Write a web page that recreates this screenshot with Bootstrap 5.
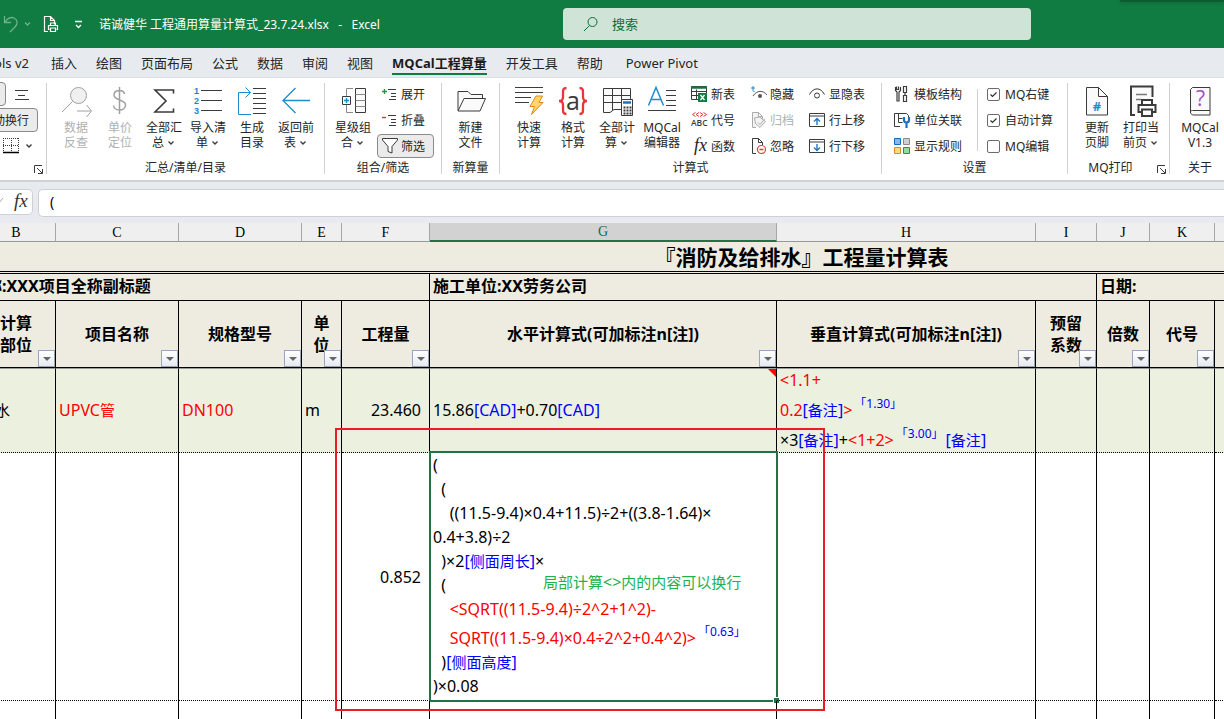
<!DOCTYPE html>
<html lang="zh-CN">
<head>
<meta charset="utf-8">
<meta name="viewport" content="width=device-width, initial-scale=1">
<title>诺诚健华 工程通用算量计算式_23.7.24.xlsx - Excel</title>
<link href="https://cdn.jsdelivr.net/npm/bootstrap@5.3.0/dist/css/bootstrap.min.css" rel="stylesheet">
<style>
  body { font-family: "Noto Sans", "Noto Sans CJK SC", sans-serif; font-size: 12px; line-height: 15px; color: #262626; background: #e7ebef; }
  svg { display: block; flex: none; fill: none; stroke: #3b3b3b; }
  svg text { stroke: none; font-family: "Open Sans", sans-serif; }

  /* title bar */
  .titlebar { height: 48px; background: #107c41; color: #fff; }
  .titlebar svg { stroke: #fff; }
  .qat { width: 99px; }
  .searchbox { left: 46%; width: 468px; height: 32px; background: #cfe3d7; border-radius: 4px; color: #0f6b38; padding: 0 20px; gap: 14px; }
  .searchbox svg { stroke: #0f6b38; }
  .searchbox input { border: 0; background: none; outline: 0; font-size: 13px; color: #0f6b38; padding: 0; }
  .searchbox input::placeholder { color: #0f6b38; opacity: 1; }
  .topshade { top: 0; right: 0; width: 104px; height: 2px; background: #0c5c31; box-shadow: 0 0 4px #0c5c31; }

  /* tabs */
  .tabs { height: 30px; font-size: 13px; line-height: 20px; padding-top: 5px; border-bottom: 1px solid #dde1e5; white-space: nowrap; }
  .tabs .nav-link { padding: 0; margin-right: 19px; color: #262626; line-height: 20px; }
  .tabs .nav-link.active { font-weight: 700; border-bottom: 2px solid #107c41; color: #1b1b1b; height: 22px; }
  .tabs .first-tab { width: 51px; }
  .tabs .first-tab .nav-link { margin-right: 22px; }

  /* ribbon */
  .ribbon { height: 102px; background: #fff; }
  .rgroup { flex: none; padding-top: 3px; }
  .rbody { height: 78px; }
  .rlabel { line-height: 18px; text-align: center; position: relative; }
  .launcher { right: 3px; bottom: 3px; padding: 0; border: 0; background: none; }
  .sep { width: 1px; flex: none; background: #d1d1d1; margin: 5px 0 6px; }
  .sep-inner { width: 1px; flex: none; background: #d1d1d1; margin: 8px 9px 8px 15px; }
  .big, .small-cmd { border: 0; background: none; color: inherit; font-size: 12px; line-height: 15px; padding: 0; border-radius: 4px; white-space: nowrap; }
  .big { width: 44px; padding-top: 3px; display: flex; flex-direction: column; align-items: center; gap: 2px; }
  .big.wide { width: 46px; }
  .small-cmd { height: 26px; display: flex; align-items: center; gap: 2px; }
  .big:disabled, .small-cmd:disabled { color: #b1b1b1; }
  .chev { display: inline-block; margin-left: 3px; vertical-align: 1px; }
  .outline-cmd { border: 1px solid #8a8a8a; background: #ebebeb; height: 24px; margin: 1px 0; }
  .in4 .small-cmd { padding-left: 4px; }
  .in4 .outline-cmd { padding-left: 3px; padding-right: 8px; }
  .tick { gap: 5px; height: 26px; }
  .tick input { appearance: none; width: 13px; height: 13px; margin: 0; border: 1px solid #6b6b6b; border-radius: 2px; background: #fff; }
  .tick input:checked { background: #fff url("data:image/svg+xml,%3Csvg xmlns='http://www.w3.org/2000/svg' viewBox='0 0 11 11'%3E%3Cpath d='M2.5 5.5l2 2 4-4' fill='none' stroke='%23333' stroke-width='1.2'/%3E%3C/svg%3E"); }

  /* formula bar */
  .fbar { height: 43px; padding: 7px 0 8px; border-top: 2px solid #cfd3d7; gap: 5px; }
  .fxbox { width: 33px; border: 1px solid #cdd1d5; border-left: 0; border-radius: 0 5px 5px 0; background: #fff; padding-right: 3px; }
  .fbar input { border: 1px solid #cdd1d5; border-right: 0; border-radius: 5px 0 0 5px; font-size: 14px; line-height: 20px; padding: 0 11px 3px; color: #000; min-height: 0; height: 28px; }

  /* sheet */
  .grid-view { background: #fff; min-height: 0; }
  .sheet { table-layout: fixed; width: 1650px; margin-left: -23px; border-collapse: separate; border-spacing: 0; color: #000; font-size: 16px; line-height: 24px; }
  .sheet td, .sheet th { border-right: 1px solid #000; padding: 0 3px; vertical-align: middle; position: relative; }
  .sheet .letters th { height: 19px; background: #efefef; border-right-color: #a6a6a6; border-bottom: 1px solid #999; font: 14px/17px "Liberation Serif", serif; text-align: center; padding-top: 1px; }
  .sheet .letters .picked { background: #d2d2d2; color: #1d6b41; border-bottom: 2px solid #217346; padding-top: 0; }
  .tan th { background: #eeece1; border-bottom: 1px solid #000; font-size: 16px; line-height: 22px; font-weight: 700; }
  .sheet .tan .sheet-title { height: 32px; font-size: 21px; line-height: 28px; text-align: center; border-bottom: 3px double #000; }
  .sheet .tan .info { height: 27px; text-align: left; padding-bottom: 2px; }
  .sheet .tan .clip-start { padding-left: 9px; }
  .heads th { height: 67px; text-align: center; }
  .filter { right: 0; bottom: 0; width: 17px; height: 17px; border: 1px solid #9aa5b8; background: linear-gradient(#fff, #e6eaf1); padding: 0; display: flex; align-items: center; justify-content: center; }
  .filter::before { content: ""; border: 4px solid transparent; border-top: 4px solid #666; border-bottom: 0; }
  .rowline td { border-bottom: 1px dotted #000; }
  .sheet .green td { height: 85px; background: #ebf1de; border-top: 1px solid #999; padding-bottom: 2px; }
  .row5 td { height: 248px; }
  .row6 td { height: 40px; }
  .tall3 { line-height: 30px; margin: -5px 0; }
  .formula { white-space: pre; }
  .raised { padding-top: 5px; }
  .cj { font-size: 15px; line-height: 0; }
  .up { font-size: 12px; line-height: 0; vertical-align: 8px; color: #00f; margin: 0 2px; }
  .r { color: #f00; }
  .b { color: #00f; }
  .note-flag { right: 0; top: 0; border: 4px solid transparent; border-top-color: #f00; border-right-color: #f00; }
  .selection { left: -1px; top: -2px; right: -2px; bottom: -2px; border: 2px solid #217346; pointer-events: none; }
  .selection::after { content: ""; position: absolute; right: -3px; bottom: -3px; width: 6px; height: 6px; background: #217346; border: 1px solid #fff; border-width: 1px 0 0 1px; }
  .callout-box { left: -95px; top: -25px; right: -49px; bottom: -11px; border: 2px solid #ed1c24; z-index: 3; pointer-events: none; }
  .callout-text { left: 113px; top: 117px; color: #22b14c; white-space: nowrap; z-index: 3; }
</style>
</head>
<body class="vh-100 overflow-hidden d-flex flex-column">

<header class="titlebar d-flex align-items-center position-relative flex-shrink-0">
  <div class="qat flex-shrink-0">
    <svg width="90" height="20" viewBox="0 0 90 20"><g opacity=".4"><path d="M4.500 2v6.500h6.500M5 8.500c2-4 6-6 9-4.500 4 2 4 6 1 9l-5 5" stroke-width="1.300"/><path d="M25 8.500l2.500 2.500 2.500-2.500" stroke-width="1.300"/></g><path d="M48 17.500h-3.500v-15h6l4 4v4M50.500 2.500v4h4M49.500 15.500h-1v-4h9v4h-1M50.500 11.500V9h5v2.500M50.500 14h5v3.500h-5z" stroke-width="1.200"/><path d="M75 7.500h7M76 11l2.500 2.500 2.500-2.500" stroke-width="1.300"/></svg>
  </div>
  <span class="text-nowrap">诺诚健华 工程通用算量计算式_23.7.24.xlsx&nbsp;&nbsp; -&nbsp;&nbsp; Excel</span>
  <label class="searchbox position-absolute d-flex align-items-center">
    <svg width="15" height="16" viewBox="0 0 15 16"><circle cx="9.500" cy="6" r="4.500"/><path d="M6.500 9.500L1 15"/></svg>
    <input type="search" class="flex-fill" placeholder="搜索" aria-label="搜索">
  </label>
  <div class="topshade position-absolute"></div>
</header>

<nav class="tabs flex-shrink-0 overflow-hidden">
  <ul class="nav flex-nowrap">
    <li class="first-tab d-flex justify-content-end flex-shrink-0"><a class="nav-link" href="#">Tools v2</a></li>
    <li><a class="nav-link" href="#">插入</a></li>
    <li><a class="nav-link" href="#">绘图</a></li>
    <li><a class="nav-link" href="#">页面布局</a></li>
    <li><a class="nav-link" href="#">公式</a></li>
    <li><a class="nav-link" href="#">数据</a></li>
    <li><a class="nav-link" href="#">审阅</a></li>
    <li><a class="nav-link" href="#">视图</a></li>
    <li><a class="nav-link active" href="#">MQCal工程算量</a></li>
    <li><a class="nav-link" href="#">开发工具</a></li>
    <li><a class="nav-link" href="#">帮助</a></li>
    <li><a class="nav-link ms-1" href="#">Power Pivot</a></li>
  </ul>
</nav>

<section class="ribbon d-flex flex-shrink-0 overflow-hidden">
  <div class="rgroup" style="width:46px">
    <div class="rbody d-flex flex-column align-items-end overflow-hidden">
      <div class="d-flex align-items-center me-3 gap-2">
        <button class="small-cmd outline-cmd px-2" aria-label="居中"><svg width="22" height="14" viewBox="0 0 22 14"><path d="M6 3.500h16M10 7.500h9M6 11.500h16"/></svg></button>
        <button class="small-cmd" aria-label="对齐"><svg width="16" height="14" viewBox="0 0 16 14"><path d="M1 3.500h13M4 8.500h7M1 12.500h14"/></svg></button>
      </div>
      <button class="small-cmd outline-cmd px-2 me-2">自动换行</button>
      <div class="d-flex align-items-center me-2 pe-1">
        <button class="small-cmd" aria-label="边框"><svg width="16" height="16" viewBox="0 0 16 16"><path d="M.5 0v14M8.500 0v14M15.500 0v14M0 .5h16M0 7.500h16" stroke-dasharray="1 1"/><path d="M0 14.500h16" stroke="#000" stroke-width="1.500"/></svg>
        <svg class="ms-1" width="9" height="6" viewBox="0 0 9 6"><path d="M1.500 1.500l2.500 2.500 2.500-2.500" stroke-width="1.400"/></svg></button>
      </div>
    </div>
    <div class="rlabel">&nbsp;<button class="launcher position-absolute" aria-label="更多"><svg width="9" height="9" viewBox="0 0 9 9"><path d="M.5 8V.5H8M3 3l5 5M8.500 4v4.500H4" /></svg></button></div>
  </div>
  <div class="sep"></div>

  <div class="rgroup" style="width:277px">
    <div class="rbody d-flex" style="padding-left:7px">
      <button class="big" disabled><svg width="36" height="34" viewBox="0 0 36 34" style="stroke:#a0a0a0"><circle cx="20.500" cy="11.500" r="8" fill="#f0f0f0"/><path d="M14.500 17.500L4 28M19 27h14M28.500 21l5 6-5 6"/></svg><span>数据<br>反查</span></button>
      <button class="big" disabled><svg width="36" height="34" viewBox="0 0 36 34" style="stroke:#a0a0a0"><path d="M17.500 3v27M22.500 10c-.5-2.500-2.500-3.500-5-3.500-3.500 0-5.500 2-5.500 4.500 0 6 11.500 4 11.500 10 0 3-2.500 5-6 5s-5.500-1.500-6-4.500" stroke-width="1.500"/></svg><span>单价<br>定位</span></button>
      <button class="big"><svg width="36" height="34" viewBox="0 0 36 34"><path d="M27.500 9.500V6H9l11 11L9 28h18.500v-3.500" stroke-width="1.600"/></svg><span>全部汇<br>总<svg class="chev" width="9" height="6" viewBox="0 0 9 6"><path d="M1.500 1.500l2.500 2.500 2.500-2.500" stroke-width="1.300"/></svg></span></button>
      <button class="big"><svg width="36" height="34" viewBox="0 0 36 34"><path d="M11 6.500h21M11 16.500h21M11 26.500h21"/><g fill="#1e83c8" font-size="9" font-weight="700"><text x="4" y="10" style="font-family:'Liberation Sans',sans-serif">1</text><text x="4" y="20" style="font-family:'Liberation Sans',sans-serif">2</text><text x="4" y="30" style="font-family:'Liberation Sans',sans-serif">3</text></g></svg><span>导入清<br>单<svg class="chev" width="9" height="6" viewBox="0 0 9 6"><path d="M1.500 1.500l2.500 2.500 2.500-2.500" stroke-width="1.300"/></svg></span></button>
      <button class="big"><svg width="36" height="34" viewBox="0 0 36 34"><path d="M17 30.500H4.500v-22H16M11.500 3.500l5 5-5 5" stroke="#1e8bcd"/><path d="M19 4.500h13M19 9.500h13M19 14.500h13M19 19.500h13M19 24.500h13M19 29.500h13"/></svg><span>生成<br>目录</span></button>
      <button class="big"><svg width="36" height="34" viewBox="0 0 36 34"><path d="M32 16.500H5M17.500 4L5 16.500 17.500 29" stroke="#1e8bcd" stroke-width="1.300"/></svg><span>返回前<br>表<svg class="chev" width="9" height="6" viewBox="0 0 9 6"><path d="M1.500 1.500l2.500 2.500 2.500-2.500" stroke-width="1.300"/></svg></span></button>
    </div>
    <div class="rlabel">汇总/清单/目录</div>
  </div>
  <div class="sep"></div>

  <div class="rgroup" style="width:116px">
    <div class="rbody d-flex" style="padding-left:4px">
      <button class="big" style="width:48px"><svg width="36" height="34" viewBox="0 0 36 34"><path d="M18 4.500h-6.500v8M11.500 21v7.500H18" stroke="#8a8a8a"/><path d="M7.500 12.500h8v8h-8zM20.500 4.500h10v24h-10z" fill="#fafafa"/><path d="M20.500 10.500h10M20.500 16.500h10M20.500 22.500h10" stroke="#8a8a8a"/><path d="M11.500 14v5M9 16.500h5" stroke="#1e8bcd" stroke-width="1.400"/></svg><span>星级组<br>合<svg class="chev" width="9" height="6" viewBox="0 0 9 6"><path d="M1.500 1.500l2.500 2.500 2.500-2.500" stroke-width="1.300"/></svg></span></button>
      <div class="in4">
        <button class="small-cmd"><svg width="18" height="18" viewBox="0 0 18 18"><path d="M3.500 4v5M1 6.500h5" stroke="#1e9b45" stroke-width="1.400"/><path d="M7 4.500h8M10 8.500h5M10 11.500h5M8 14.500h7"/></svg>展开</button>
        <button class="small-cmd"><svg width="18" height="18" viewBox="0 0 18 18"><path d="M1 6.500h4" stroke="#e03030" stroke-width="1.400"/><path d="M7 4.500h8M10 8.500h5M10 11.500h5M8 14.500h7"/></svg>折叠</button>
        <button class="small-cmd outline-cmd"><svg width="18" height="18" viewBox="0 0 18 18"><path d="M1.500 1.500h15v1.500L11 9.500V16l-4-1.500v-5L1.500 3z" fill="#fff"/></svg>筛选</button>
      </div>
    </div>
    <div class="rlabel">组合/筛选</div>
  </div>
  <div class="sep"></div>

  <div class="rgroup" style="width:57px">
    <div class="rbody d-flex justify-content-center">
      <button class="big"><svg width="36" height="34" viewBox="0 0 36 34"><path d="M5 26.500V7.500h10l3 3h11.500v4M5 27l6-12.500h21.500L27 27z" fill="#fafafa"/></svg><span>新建<br>文件</span></button>
    </div>
    <div class="rlabel">新算量</div>
  </div>
  <div class="sep"></div>

  <div class="rgroup" style="width:381px">
    <div class="rbody d-flex" style="padding-left:7px">
      <button class="big"><svg width="36" height="34" viewBox="0 0 36 34"><path d="M4 3.500h28M4 8.500h28M4 13.500h16M4 18.500h14"/><path d="M25 12h6.500L28 18.500h4L20.500 30.500l3-8H19z" fill="#ffd76a" stroke="#e08a1e"/></svg><span>快速<br>计算</span></button>
      <button class="big"><svg width="36" height="34" viewBox="0 0 36 34"><path d="M11.500 4C8 4 8 6 8 9v4c0 2-1 4-4 4 3 0 4 2 4 4v4c0 3 0 5 3.500 5M24.500 4C28 4 28 6 28 9v4c0 2 1 4 4 4-3 0-4 2-4 4v4c0 3 0 5-3.500 5" stroke="#e8363c" stroke-width="2.300"/><text x="18" y="26" font-size="25" text-anchor="middle" fill="#3b3b3b">a</text></svg><span>格式<br>计算</span></button>
      <button class="big"><svg width="36" height="34" viewBox="0 0 36 34"><path d="M31.500 15V4.500h-27v24H11l4-3h7M13.500 4.500v22M22.500 4.500v22M4.500 11.500h27M4.500 18.500h18" fill="#fafafa"/><path d="M22.500 15.500h11v16h-11z" fill="#fff"/><path d="M24 18.500h8" stroke="#1e6fc0" stroke-width="2.500"/><path d="M24.500 23.500h8M24.500 26.500h8M24.500 29.500h8" stroke-width="2" stroke-dasharray="2 1"/></svg><span>全部计<br>算<svg class="chev" width="9" height="6" viewBox="0 0 9 6"><path d="M1.500 1.500l2.500 2.500 2.500-2.500" stroke-width="1.300"/></svg></span></button>
      <button class="big wide"><svg width="36" height="34" viewBox="0 0 36 34"><path d="M4.500 21.500l7.500-18 7.500 18M7 15.500h10" stroke="#1e8bcd" stroke-width="1.500"/><path d="M22 6.500h10M22 11.500h10M22 16.500h10M22 21.500h10M4 26.500h28"/></svg><span>MQCal<br>编辑器</span></button>
      <div class="d-flex" style="gap:15px;padding-left:6px">
        <div>
          <button class="small-cmd"><svg width="18" height="18" viewBox="0 0 18 18"><path d="M.5 1.500h15v13H.5zM.5 6.500h15M.5 10.500h8M5.500 4.500v10"/><path d="M0 2.500h16" stroke-width="2.500" stroke="#1e7145"/><path d="M7 8h9v9H7z" fill="#107c41" stroke="none"/><path d="M9.500 10l4 5M13.500 10l-4 5" stroke="#fff" stroke-width="1.300"/></svg>新表</button>
          <button class="small-cmd"><svg width="18" height="18" viewBox="0 0 18 18"><path d="M4.500 1.500l-3 2 3 2M8 1.500l-3 2 3 2M9 1.500l3 2-3 2M12.500 1.500l3 2-3 2" stroke="#e8363c"/><text x="0" y="15" font-size="8.500" font-weight="600" fill="#3b3b3b">ABC</text></svg>代号</button>
          <button class="small-cmd"><svg width="18" height="18" viewBox="0 0 18 18"><text x="3" y="14" font-size="18" font-style="italic" fill="#222" style="font-family:'Liberation Serif',serif">fx</text></svg>函数</button>
        </div>
        <div>
          <button class="small-cmd"><svg width="18" height="18" viewBox="0 0 18 18"><path d="M3 1v4.500c0 .5.500 1 1.500 1M1 3h4" stroke="#1e8bcd"/><path d="M3 11c4-6 10-6 14-1" stroke="#555"/><circle cx="10" cy="11" r="2" fill="#555" stroke="none"/></svg>隐藏</button>
          <button class="small-cmd" disabled><svg width="18" height="18" viewBox="0 0 18 18" style="stroke:#aaa"><path d="M6 16.500H2.500v-15h6l4 4V8M8.500 1.500v4h4" fill="#f3f3f3"/><path d="M4.500 7l5-1 6 4.500-5.500 6-4.500-4z" fill="#f3f3f3"/><path d="M8 11.500l2 2 5-6"/></svg>归档</button>
          <button class="small-cmd"><svg width="18" height="18" viewBox="0 0 18 18"><path d="M6 16.500H2.500v-15h6l4 4V8M8.500 1.500v4h4" fill="#fafafa"/><circle cx="11.500" cy="12.500" r="4" fill="#fff" stroke="#e8363c" stroke-width="1.200"/><path d="M9.500 12.500h4" stroke="#e8363c" stroke-width="1.500"/></svg>忽略</button>
        </div>
        <div>
          <button class="small-cmd"><svg width="18" height="18" viewBox="0 0 18 18"><path d="M.5 9.500c4-7.500 11-7.500 15 0"/><circle cx="8" cy="10.500" r="2.500"/></svg>显隐表</button>
          <button class="small-cmd"><svg width="18" height="18" viewBox="0 0 18 18"><path d="M.5 2.500h15v13H.5zM.5 5h15" /><path d="M8 14V7.500M5 10.500l3-3 3 3" stroke="#1e78c8" stroke-width="1.400"/></svg>行上移</button>
          <button class="small-cmd"><svg width="18" height="18" viewBox="0 0 18 18"><path d="M.5 2.500h15v13H.5zM.5 5h15" /><path d="M8 7v6.500M5 10.500l3 3 3-3" stroke="#1e78c8" stroke-width="1.400"/></svg>行下移</button>
        </div>
      </div>
    </div>
    <div class="rlabel">计算式</div>
  </div>
  <div class="sep"></div>

  <div class="rgroup" style="width:185px">
    <div class="rbody d-flex" style="padding-left:12px">
      <div>
        <button class="small-cmd"><svg width="18" height="18" viewBox="0 0 18 18"><path d="M2.500 1.500v3h2v-3M1.500 2v3.500l1.500 1.500v9h2V7l1.500-1.500V2M9.500 1.500h3v6h-3zM11 7.500v3M9.500 10.500h3v6h-3z" stroke-width="1.200"/></svg>模板结构</button>
        <button class="small-cmd"><svg width="18" height="18" viewBox="0 0 18 18"><path d="M6 15.500H.5v-13h12l2 2V7M4.500 2.500v9h4M4.500 7.500h4"/><path d="M10 6v3c0 1.500 1 2.500 2.500 2.500S15 10.500 15 9V6M12.500 11v6" stroke="#1e6fc0" stroke-width="2.200"/></svg>单位关联</button>
        <button class="small-cmd"><svg width="18" height="18" viewBox="0 0 18 18"><path d="M.5 1.500h6v6h-6z" fill="#83b9ec" stroke="#1769b5"/><path d="M9.500 1.500h6v6h-6z" fill="#cfcfcf" stroke="#8a8a8a"/><path d="M.5 10.500h6v6h-6z" fill="#fcd98a" stroke="#e08a1e"/><path d="M9.500 10.500h6v6h-6z" fill="#9bd6a5" stroke="#2c9143"/></svg>显示规则</button>
      </div>
      <div class="sep-inner"></div>
      <div>
        <label class="tick d-flex align-items-center"><input type="checkbox" checked>MQ右键</label>
        <label class="tick d-flex align-items-center"><input type="checkbox" checked>自动计算</label>
        <label class="tick d-flex align-items-center"><input type="checkbox">MQ编辑</label>
      </div>
    </div>
    <div class="rlabel">设置</div>
  </div>
  <div class="sep"></div>

  <div class="rgroup" style="width:101px">
    <div class="rbody d-flex" style="padding-left:7px">
      <button class="big"><svg width="36" height="34" viewBox="0 0 36 34"><path d="M7.500 3.500h12l9 9V31h-21zM19.500 3.500v9h9" fill="#fafafa"/><text x="18" y="27" font-size="13" font-weight="700" text-anchor="middle" fill="#1e8bcd">#</text></svg><span>更新<br>页脚</span></button>
      <button class="big"><svg width="36" height="34" viewBox="0 0 36 34"><path d="M12 31H8V2.500h21.500V13" stroke-width="2" fill="#fafafa"/><path d="M13 10.500h11M13 15.500h5" stroke="#777" stroke-width="1.500"/><path d="M18 28h-2.500v-7h17v7H30M19 20.500V16h10v4.500M19 25.500h10V32H19z" fill="#fff" stroke-width="2"/></svg><span>打印当<br>前页<svg class="chev" width="9" height="6" viewBox="0 0 9 6"><path d="M1.500 1.500l2.500 2.500 2.500-2.500" stroke-width="1.300"/></svg></span></button>
    </div>
    <div class="rlabel pe-3">MQ打印<button class="launcher position-absolute" aria-label="更多"><svg width="9" height="9" viewBox="0 0 9 9"><path d="M.5 8V.5H8M3 3l5 5M8.500 4v4.500H4" /></svg></button></div>
  </div>
  <div class="sep"></div>

  <div class="rgroup" style="width:60px">
    <div class="rbody d-flex justify-content-center">
      <button class="big wide"><svg width="36" height="34" viewBox="0 0 36 34"><path d="M28 26.500V3.500H10.500l-2 2V29l2 2H28zM8.500 28c0-1 1-1.500 2-1.500H28" fill="#fafafa"/><text x="18.500" y="22" font-size="21" text-anchor="middle" fill="#a84bc4">?</text></svg><span>MQCal<br>V1.3</span></button>
    </div>
    <div class="rlabel">关于</div>
  </div>
</section>

<div class="fbar d-flex flex-shrink-0">
  <div class="fxbox d-flex align-items-center justify-content-end flex-shrink-0">
    <svg width="30" height="22" viewBox="0 0 30 22"><path d="M0 12L4 7" stroke="#aaa"/><text x="15" y="16" font-size="19" font-style="italic" fill="#333" style="font-family:'Liberation Serif',serif">fx</text></svg>
  </div>
  <input type="text" class="flex-fill" value="(" aria-label="编辑栏">
</div>

<main class="grid-view flex-fill overflow-hidden">
  <table class="sheet">
    <colgroup>
      <col style="width:79px"><col style="width:123px"><col style="width:123px"><col style="width:40px"><col style="width:88px"><col style="width:347px"><col style="width:259px"><col style="width:61px"><col style="width:53px"><col style="width:65px"><col>
    </colgroup>
    <thead>
      <tr class="letters"><th>B</th><th>C</th><th>D</th><th>E</th><th>F</th><th class="picked">G</th><th>H</th><th>I</th><th>J</th><th>K</th><th>L</th></tr>
      <tr class="tan"><th colspan="11" class="sheet-title">『消防及给排水』工程量计算表</th></tr>
      <tr class="tan"><th colspan="5" class="info clip-start">称:XXX项目全称副标题</th><th colspan="3" class="info">施工单位:XX劳务公司</th><th colspan="3" class="info">日期:</th></tr>
      <tr class="tan heads">
        <th>计算<br>部位<button class="filter position-absolute" aria-label="筛选"></button></th>
        <th>项目名称<button class="filter position-absolute" aria-label="筛选"></button></th>
        <th>规格型号<button class="filter position-absolute" aria-label="筛选"></button></th>
        <th>单<br>位<button class="filter position-absolute" aria-label="筛选"></button></th>
        <th>工程量<button class="filter position-absolute" aria-label="筛选"></button></th>
        <th>水平计算式(可加标注n[注])<button class="filter position-absolute" aria-label="筛选"></button></th>
        <th>垂直计算式(可加标注n[注])<button class="filter position-absolute" aria-label="筛选"></button></th>
        <th>预留<br>系数<button class="filter position-absolute" aria-label="筛选"></button></th>
        <th>倍数<button class="filter position-absolute" aria-label="筛选"></button></th>
        <th>代号<button class="filter position-absolute" aria-label="筛选"></button></th>
        <th></th>
      </tr>
    </thead>
    <tbody>
      <tr class="green rowline">
        <td><span class="cj">给水</span></td><td class="r">UPVC<span class="cj">管</span></td><td class="r">DN100</td><td>m</td><td class="text-end pe-2">23.460</td>
        <td>15.86<span class="b">[CAD]</span>+0.70<span class="b">[CAD]</span><span class="note-flag position-absolute"></span></td>
        <td><div class="tall3"><span class="r">&lt;1.1+</span><br><span class="r">0.2<span class="b">[<span class="cj">备注</span>]</span>&gt;</span><span class="up">「1.30」</span><br>×3<span class="b">[<span class="cj">备注</span>]</span>+<span class="r">&lt;1+2&gt;</span><span class="up">「3.00」</span><span class="b">[<span class="cj">备注</span>]</span></div></td>
        <td></td><td></td><td></td><td></td>
      </tr>
      <tr class="rowline row5">
        <td></td><td></td><td></td><td></td><td class="text-end pe-2">0.852</td>
        <td class="align-top formula"><div>(</div><div>  (</div><div>    ((11.5-9.4)×0.4+11.5)÷2+((3.8-1.64)×</div><div>0.4+3.8)÷2</div><div>  )×2<span class="b">[<span class="cj">侧面周长</span>]</span>×</div><div>  (</div><div class="r">    &lt;SQRT((11.5-9.4)÷2^2+1^2)-</div><div class="r raised">    SQRT((11.5-9.4)×0.4÷2^2+0.4^2)&gt;<span class="up">「0.63」</span></div><div>  )<span class="b">[<span class="cj">侧面高度</span>]</span></div><div>)×0.08</div><div class="selection position-absolute"></div><div class="callout-text position-absolute"><span class="cj">局部计算</span>&lt;&gt;<span class="cj">内的内容可以换行</span></div><div class="callout-box position-absolute"></div></td>
        <td></td><td></td><td></td><td></td><td></td>
      </tr>
      <tr class="row6"><td></td><td></td><td></td><td></td><td></td><td></td><td></td><td></td><td></td><td></td><td></td></tr>
    </tbody>
  </table>
</main>
<script src="https://cdn.jsdelivr.net/npm/bootstrap@5.3.0/dist/js/bootstrap.bundle.min.js"></script>
</body>
</html>
